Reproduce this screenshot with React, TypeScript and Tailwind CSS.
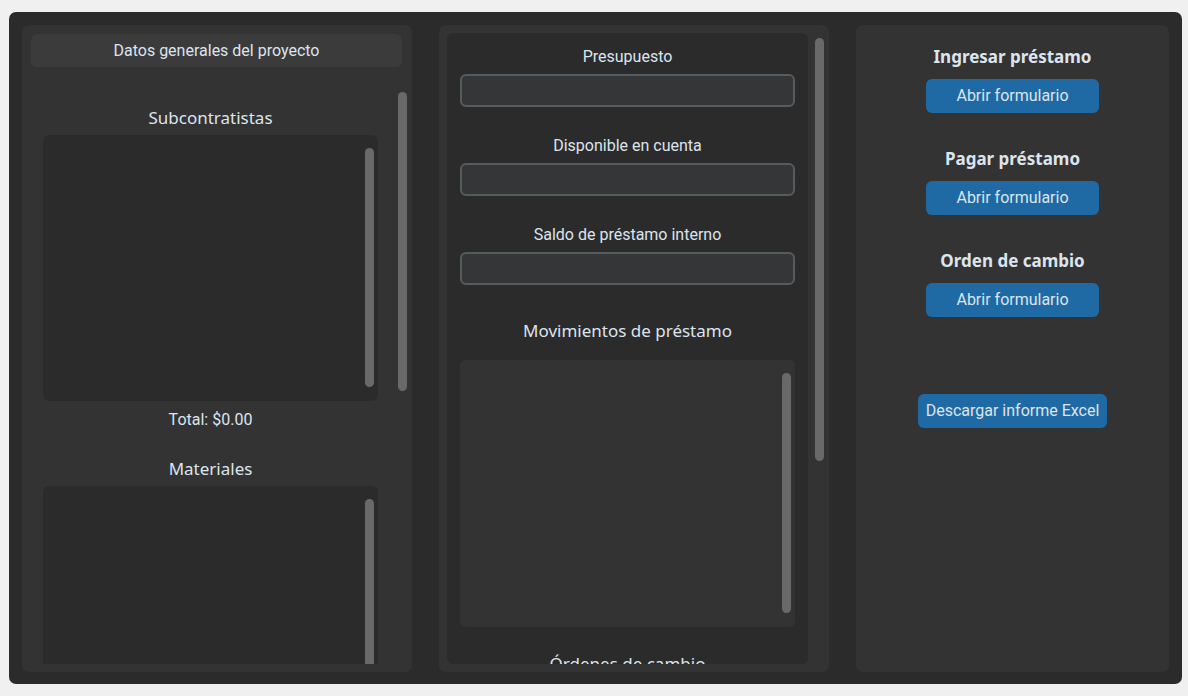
import React from 'react'

const roboto = { fontFamily: 'Roboto, "Liberation Sans", sans-serif' }

function ScrollThumb({ className }: { className: string }) {
  return <div className={`w-[9px] rounded-full bg-[#696969] ${className}`} />
}

function TextBox({ className, bg }: { className: string; bg: string }) {
  return (
    <div className={`flex shrink-0 justify-end rounded-[6px] pr-[4px] ${bg} ${className}`}>
      <ScrollThumb className="mt-[13px] mb-[14px]" />
    </div>
  )
}

function Field({ label }: { label: string }) {
  return (
    <div className="flex flex-col items-center">
      <div className="text-[16px] leading-[19px] text-[#dce4ee]">{label}</div>
      <div className="mt-[8px] h-[33px] w-full rounded-[6px] border-2 border-[#565b5e] bg-[#343638]" />
    </div>
  )
}

function ActionBlock({ title }: { title: string }) {
  return (
    <div className="flex flex-col items-center">
      <div className="font-['Noto_Sans',sans-serif] text-[17px] font-bold leading-[22px] text-[#dce4ee]">{title}</div>
      <button className="mt-[11px] h-[34px] w-[173px] rounded-[6px] bg-[#1f6aa5] text-[16px] text-[#dce4ee]">
        Abrir formulario
      </button>
    </div>
  )
}

export default function App() {
  return (
    <div className="h-[696px] w-full bg-[#f0f0f0] pb-[12px] pl-[9px] pr-[6px] pt-[12px]" style={roboto}>
      <div className="flex h-full gap-[27px] rounded-[7px] bg-[#2b2b2b] px-[13px] pb-[12px] pt-[13px]">
        {/* proyecto */}
        <div className="flex w-[390px] flex-col overflow-hidden rounded-[7px] bg-[#333333] pb-[8px] pl-[9px] pr-[5px] pt-[9px]">
          <div className="mr-[5px] flex h-[33px] shrink-0 items-center justify-center rounded-[6px] bg-[#3b3b3b] pt-[1px] text-[16px] text-[#dce4ee]">
            Datos generales del proyecto
          </div>
          <div className="mt-[20px] flex min-h-0 flex-1 gap-[8px]">
            <div className="flex min-w-0 flex-1 flex-col items-stretch overflow-hidden px-[12px] pt-[19px]">
              <div className="text-center font-['Noto_Sans',sans-serif] text-[17px] leading-[24px] text-[#dce4ee]">Subcontratistas</div>
              <TextBox className="mt-[5px] h-[266px]" bg="bg-[#2b2b2b]" />
              <div className="mt-[9px] text-center text-[16px] leading-[19px] text-[#dce4ee]">Total: $0.00</div>
              <div className="mt-[28px] text-center font-['Noto_Sans',sans-serif] text-[17px] leading-[24px] text-[#dce4ee]">Materiales</div>
              <TextBox className="mt-[5px] h-[266px]" bg="bg-[#2b2b2b]" />
            </div>
            <ScrollThumb className="mt-[5px] h-[299px] shrink-0" />
          </div>
        </div>

        {/* préstamo */}
        <div className="flex w-[390px] gap-[7px] overflow-hidden rounded-[7px] bg-[#333333] pb-[8px] pl-[8px] pr-[5px] pt-[8px]">
          <div className="flex min-w-0 flex-1 flex-col overflow-hidden rounded-[6px] bg-[#2b2b2b] px-[13px] pt-[14px]">
            <div className="flex flex-col gap-[29px]">
              <Field label="Presupuesto" />
              <Field label="Disponible en cuenta" />
              <Field label="Saldo de préstamo interno" />
            </div>
            <div className="mt-[33px] text-center font-['Noto_Sans',sans-serif] text-[17px] leading-[26px] text-[#dce4ee]">
              Movimientos de préstamo
            </div>
            <TextBox className="mt-[16px] h-[267px]" bg="bg-[#333333]" />
            <div className="mt-[24px] text-center font-['Noto_Sans',sans-serif] text-[17px] leading-[26px] text-[#dce4ee]">
              Órdenes de cambio
            </div>
          </div>
          <ScrollThumb className="mt-[5px] h-[423px] shrink-0" />
        </div>

        {/* acciones */}
        <div className="flex flex-1 flex-col items-center rounded-[7px] bg-[#333333] pt-[21px]">
          <div className="flex flex-col gap-[35px]">
            <ActionBlock title="Ingresar préstamo" />
            <ActionBlock title="Pagar préstamo" />
            <ActionBlock title="Orden de cambio" />
          </div>
          <button className="mt-[77px] h-[34px] w-[189px] rounded-[6px] bg-[#1f6aa5] text-[16px] text-[#dce4ee]">
            Descargar informe Excel
          </button>
        </div>
      </div>
    </div>
  )
}
